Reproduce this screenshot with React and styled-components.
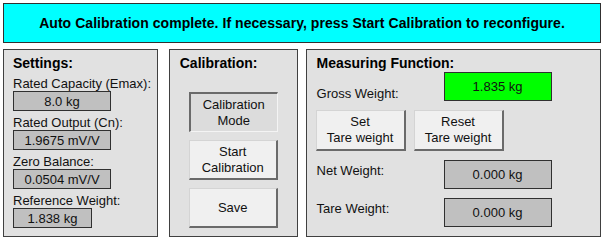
import React from "react";
import styled, { createGlobalStyle } from "styled-components";

const Global = createGlobalStyle`
  html, body { margin: 0; padding: 0; background: #ffffff; }
  body { font-family: "Liberation Sans", Arial, sans-serif; font-size: 13px; color: #111; }
  * { box-sizing: border-box; }
`;

const Page = styled.div`
  width: 605px;
  height: 242px;
  padding: 3px 4px 0 3px;
  display: flex;
  flex-direction: column;
  gap: 6px;
`;

const Banner = styled.div`
  height: 40px;
  background: #00ffff;
  border: 1px solid #303030;
  display: flex;
  align-items: center;
  justify-content: center;
  font-weight: bold;
  font-size: 14px;
  letter-spacing: 0.05px;
  color: #000;
`;

const Panels = styled.div`
  display: flex;
  height: 188px;
`;

const Panel = styled.div`
  width: ${(p) => p.$w}px;
  margin-right: ${(p) => p.$mr || 0}px;
  background: #e1e1e1;
  border: 1px solid #404040;
  padding: 5px 0 0 ${(p) => p.$pl}px;
  display: flex;
  flex-direction: column;
`;

const Title = styled.div`
  font-weight: bold;
  font-size: 14px;
  line-height: 16px;
  color: #000;
`;

const Fields = styled.div`
  display: flex;
  flex-direction: column;
  gap: 4px;
  margin-top: 5px;
`;

const Label = styled.div`
  line-height: 15px;
  height: 15px;
  white-space: nowrap;
`;

const ValueBox = styled.div`
  width: ${(p) => p.$w}px;
  height: ${(p) => p.$h || 20}px;
  background: ${(p) => (p.$green ? "#00ff00" : "#c0c0c0")};
  border: 1px solid #303030;
  display: flex;
  align-items: center;
  justify-content: center;
  color: #111;
`;

const ButtonCol = styled.div`
  display: flex;
  flex-direction: column;
  gap: 8px;
  margin: 21px 0 0 ${(p) => p.$ml}px;
`;

const Button = styled.div`
  width: ${(p) => p.$w || 89}px;
  height: ${(p) => p.$h || 40}px;
  display: flex;
  align-items: center;
  justify-content: center;
  text-align: center;
  line-height: 16px;
  color: #111;
  background: ${(p) => (p.$pressed ? "#dcdcdc" : "#f0f0f0")};
  border-style: solid;
  border-color: ${(p) =>
    p.$pressed
      ? "#6a6a6a #f4f4f4 #f4f4f4 #6a6a6a"
      : "#d4d4d4 #6a6a6a #6a6a6a #d4d4d4"};
  border-width: ${(p) => (p.$pressed ? "2px 1px 1px 2px" : "1px 2px 2px 1px")};
`;

const MeasureGrid = styled.div`
  display: grid;
  grid-template-columns: 127px 108px;
  grid-template-rows: 29px 41px 29px 29px;
  row-gap: 9px;
  margin-top: 1px;
  align-items: center;
`;

const ButtonRow = styled.div`
  grid-column: 1 / span 2;
  display: flex;
  gap: 8px;
  margin-left: -1px;
`;

const MLabel = styled.div`
  white-space: nowrap;
  padding-top: ${(p) => p.$pt || 0}px;
  align-self: ${(p) => p.$align || "center"};
`;

const settings = [
  { label: "Rated Capacity (Emax):", value: "8.0 kg", w: 98 },
  { label: "Rated Output (Cn):", value: "1.9675 mV/V", w: 98 },
  { label: "Zero Balance:", value: "0.0504 mV/V", w: 98 },
  { label: "Reference Weight:", value: "1.838 kg", w: 79 },
];

export default function App() {
  return (
    <>
      <Global />
      <Page>
        <Banner>
          Auto Calibration complete. If necessary, press Start Calibration to reconfigure.
        </Banner>
        <Panels>
          <Panel $w={155} $mr={11} $pl={9}>
            <Title>Settings:</Title>
            <Fields>
              {settings.map((s) => (
                <div key={s.label}>
                  <Label>{s.label}</Label>
                  <ValueBox $w={s.w}>{s.value}</ValueBox>
                </div>
              ))}
            </Fields>
          </Panel>
          <Panel $w={129} $mr={8} $pl={10}>
            <Title>Calibration:</Title>
            <ButtonCol $ml={9}>
              <Button $pressed>
                Calibration
                <br />
                Mode
              </Button>
              <Button>
                Start
                <br />
                Calibration
              </Button>
              <Button>Save</Button>
            </ButtonCol>
          </Panel>
          <Panel $w={296} $pl={10}>
            <Title>Measuring Function:</Title>
            <MeasureGrid>
              <MLabel $pt={14}>Gross Weight:</MLabel>
              <ValueBox $w={108} $h={29} $green>1.835 kg</ValueBox>
              <ButtonRow>
                <Button $w={90} $h={41}>
                  Set
                  <br />
                  Tare weight
                </Button>
                <Button $w={90} $h={41}>
                  Reset
                  <br />
                  Tare weight
                </Button>
              </ButtonRow>
              <MLabel $align="start" $pt={3}>Net Weight:</MLabel>
              <ValueBox $w={108} $h={29}>0.000 kg</ValueBox>
              <MLabel $align="start" $pt={3}>Tare Weight:</MLabel>
              <ValueBox $w={108} $h={29}>0.000 kg</ValueBox>
            </MeasureGrid>
          </Panel>
        </Panels>
      </Page>
    </>
  );
}
